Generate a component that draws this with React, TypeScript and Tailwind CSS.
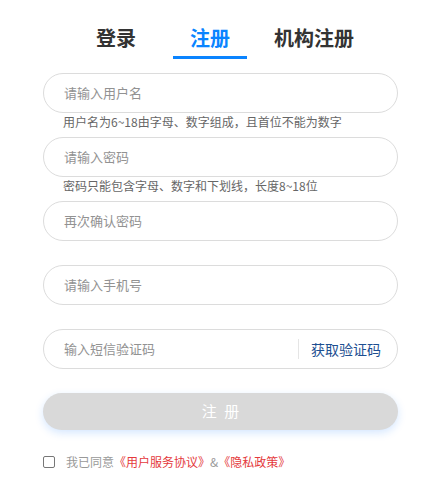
import React from "react";

const font = { fontFamily: '"Noto Sans CJK SC", "Noto Sans", sans-serif' };

function Field({ placeholder, hint }: { placeholder: string; hint?: string }) {
  return (
    <div>
      <div className="h-[40px] rounded-full border border-[#dcdcdc] flex items-center pl-[20px] text-[13px] text-[#929292]">
        {placeholder}
      </div>
      <div className="h-[24px] pl-[20px] text-[12px] leading-[18px] text-[#666]">{hint ?? ""}</div>
    </div>
  );
}

export default function App() {
  return (
    <div className="w-[445px] h-[503px] bg-white" style={font}>
      <div className="pt-[24px] pl-[96px] flex items-start">
        <div className="text-[20px] leading-[28px] font-bold text-[#333]">登录</div>
        <div className="ml-[37px] flex flex-col items-center w-[74px]">
          <div className="text-[20px] leading-[28px] font-bold text-[#0a84ff]">注册</div>
          <div className="mt-[4px] h-[3px] w-[74px] bg-[#0a84ff]" />
        </div>
        <div className="ml-[27px] text-[20px] leading-[28px] font-bold text-[#333]">机构注册</div>
      </div>
      <div className="mt-[14px] ml-[43px] w-[355px]">
        <Field placeholder="请输入用户名" hint="用户名为6~18由字母、数字组成，且首位不能为数字" />
        <Field placeholder="请输入密码" hint="密码只能包含字母、数字和下划线，长度8~18位" />
        <Field placeholder="再次确认密码" />
        <Field placeholder="请输入手机号" />
        <div>
          <div className="h-[40px] rounded-full border border-[#dcdcdc] flex items-center pl-[20px] pr-[16px] text-[13px] text-[#929292]">
            <span className="flex-1">输入短信验证码</span>
            <span className="h-[20px] w-px bg-[#e5e5e5] mr-[12px]" />
            <span className="text-[14px] text-[#1d4f91]">获取验证码</span>
          </div>
          <div className="h-[24px]" />
        </div>
        <div className="h-[37px] rounded-full bg-[#d9d9d9] shadow-[0_3px_8px_rgba(24,120,255,0.18)] flex items-center justify-center text-[15px] text-white">
          <span className="tracking-[2px] pl-[2px]">注 册</span>
        </div>
        <div className="mt-[23px] h-[18px] flex items-center text-[12px]">
          <span className="w-[12px] h-[12px] border border-[#777] rounded-[2px] bg-white" />
          <span className="ml-[11px] text-[#999]">我已同意</span>
          <span className="text-[#e4393c]">《用户服务协议》</span>
          <span className="text-[#999]">&amp;</span>
          <span className="text-[#e4393c]">《隐私政策》</span>
        </div>
      </div>
    </div>
  );
}
